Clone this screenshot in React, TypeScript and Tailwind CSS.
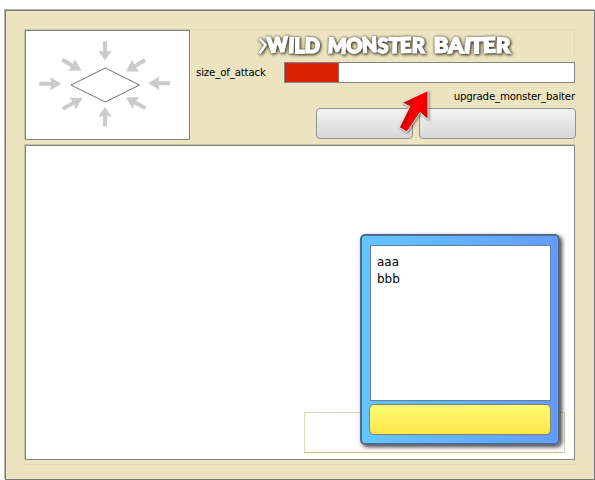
const arrows = [
  { x: 105, y: 60.5, r: 90 },
  { x: 61.5, y: 83.8, r: 0 },
  { x: 148, y: 83.3, r: 180 },
  { x: 105, y: 107, r: -90 },
  { x: 81.5, y: 70.5, r: 29 },
  { x: 126, y: 71.5, r: 149 },
  { x: 82.5, y: 98, r: -29 },
  { x: 126, y: 97.5, r: 209 },
];

function AttackMap() {
  return (
    <div className="box-border h-[110px] w-[165px] border border-[#858585] bg-white shadow-[-1px_-1px_0_#c5c1ad]">
      <svg className="block" width="163" height="108" viewBox="26 31 163 108">
        {arrows.map((a, i) => (
          <path
            key={i}
            d="M-22.3 -2H-10.5L-11.5 -6.8L0 0L-11.5 6.8L-10.5 2H-22.3Z"
            fill="#cbcbcb"
            transform={`translate(${a.x} ${a.y}) rotate(${a.r}) scale(${i === 0 || i === 3 ? 0.86 : 1} 1)`}
          />
        ))}
        <path d="M71 85L105.3 68L139.5 85L105.3 102Z" fill="white" stroke="#777" strokeWidth="1" />
      </svg>
    </div>
  );
}

function Title() {
  return (
    <svg
      className="absolute left-[61px] top-[2px] overflow-visible [filter:drop-shadow(0_0_1px_rgba(40,35,20,0.6))_drop-shadow(1px_1px_1.5px_rgba(30,25,10,0.8))]"
      width="265"
      height="30"
      viewBox="252 32 265 30"
      fontFamily="Lato, 'Liberation Sans', sans-serif"
      fontWeight="900"
      fontSize="20.5"
      fill="white"
      stroke="white"
      strokeWidth="1.8"
      strokeLinejoin="miter"
    >
      <path d="M260.5 38.5L266.5 45L260.5 53.5" fill="none" strokeWidth="2.6" />
      <text y="52.5" x="268.5" textLength="52" lengthAdjust="spacingAndGlyphs" rotate="-3 2 0 3">WILD</text>
      <text y="52.5" x="328.5" textLength="97" lengthAdjust="spacingAndGlyphs" rotate="3 0 -3 0 2 -2 2">MONSTER</text>
      <text y="52.5" x="435" textLength="76" lengthAdjust="spacingAndGlyphs" rotate="-1 0 6 0 -2 2">BAITER</text>
    </svg>
  );
}

function Header() {
  return (
    <div className="relative h-[110px] grow">
      <Title />
      <div className="mt-[32px] flex h-[21px] items-center justify-between pl-[6px]">
        <span className="pt-[2px] text-[10.2px] leading-none tracking-[-0.14px]">size_of_attack</span>
        <div className="h-[21px] w-[291px] border border-[#858585] bg-white">
          <div className="h-full w-[54px] border-r border-[#b06050] bg-[#dc2100]" />
        </div>
      </div>
      <div className="mt-[8px] h-[12px] text-right text-[10.2px] leading-[12px] tracking-[-0.17px]">upgrade_monster_baiter</div>
      <div className="-mr-px mt-[5px] flex justify-end gap-[6px]">
        <button className="h-[31px] w-[97px] rounded-[4px] border border-[#929292] bg-linear-to-b from-[#f3f3f3] to-[#d8d8d8]" />
        <button className="h-[31px] w-[157px] rounded-[4px] border border-[#929292] bg-linear-to-b from-[#f3f3f3] to-[#d8d8d8]" />
      </div>
      <svg
        className="absolute left-[203px] top-[55px] drop-shadow-[1px_1px_1px_rgba(0,0,0,0.45)]"
        width="42"
        height="52"
        viewBox="393 85 42 52"
      >
        <defs>
          <linearGradient id="pointer" x1="0" x2="1" y1="0.2" y2="0.7">
            <stop offset="0.25" stopColor="#c00b0b" />
            <stop offset="0.55" stopColor="#ff0000" />
            <stop offset="1" stopColor="#d80000" />
          </linearGradient>
        </defs>
        <path
          d="M428 90.5L402 102.7L409.7 106.5L399.3 127.5L407 132L420 112.5L428 119.5Z"
          fill="url(#pointer)"
          stroke="#ffe4e4"
          strokeWidth="1"
        />
      </svg>
    </div>
  );
}

function Dialog() {
  return (
    <div className="absolute left-[334px] top-[88px] flex h-[211px] w-[200px] flex-col rounded-[5px] border-2 border-[#526b8d] bg-linear-to-r from-[#63c6ff] to-[#649bff] px-[8px] pt-[9px] shadow-[2px_2px_4px_rgba(0,0,0,0.75)]">
      <div className="h-[156px] w-[181px] border border-[#667f9c] bg-white px-[6px] pt-[8px] text-[12px] leading-[17px]">
        <div>aaa</div>
        <div>bbb</div>
      </div>
      <button className="-ml-px mt-[3px] h-[31px] w-[182px] rounded-[5px] border border-[#84806a] bg-linear-to-b from-[#fffb75] to-[#ffe749]" />
    </div>
  );
}

export default function App() {
  return (
    <div className="h-[480px] w-[595px] overflow-hidden bg-white pl-[5px] pt-[10px] font-['DejaVu_Sans',sans-serif] text-black">
      <div className="h-[470px] w-[590px] border border-[#777] bg-[#ece4c0] pl-[19px] pt-[19px] shadow-[-1px_-1px_0_#b5b5b5]">
        <div className="-ml-px -mt-px w-[551px] border border-[#e3dbb6] pb-[4px]">
          <div className="w-[550px]">
            <div className="flex">
              <AttackMap />
              <Header />
            </div>
            <div className="relative mt-[5px] h-[315px] w-[550px] border border-[#858585] bg-white shadow-[-1px_-1px_0_#c5c1ad]">
              <div className="absolute left-[278px] top-[266px] h-[41px] w-[261px] border border-[#e0d8b8] border-b-[#c8bd82]" />
              <Dialog />
            </div>
          </div>
        </div>
      </div>
    </div>
  );
}
